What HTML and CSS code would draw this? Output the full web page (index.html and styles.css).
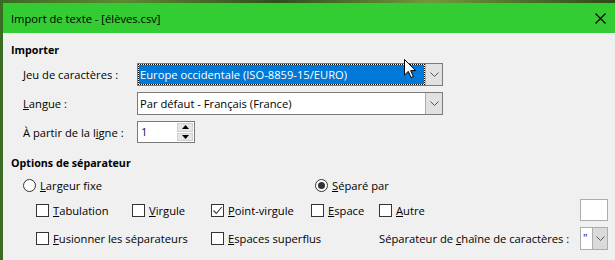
FILE: index.html
```html
<!DOCTYPE html>
<html lang="fr">
<head>
  <meta charset="UTF-8">
  <title>Import de texte</title>
  <link rel="stylesheet" href="styles.css">
</head>
<body>

<div class="desktop">
  <div class="window">
    <div class="titlebar">
      <span class="title">Import de texte - [élèves.csv]</span>
      <svg class="close" width="11" height="11" viewBox="0 0 11 11">
        <path d="M0.5 0.5 L10.5 10.5 M10.5 0.5 L0.5 10.5" stroke="#000" stroke-width="1.1" fill="none"/>
      </svg>
    </div>

    <div class="content">
      <div class="section-title">Importer</div>

      <div class="form-list">
        <div class="form-row">
          <span class="field-label"><u>J</u>eu de caractères :</span>
          <div class="combo">
            <div class="combo-value selected"><span>Europe occidentale (ISO-8859-15/EURO)</span></div>
            <div class="combo-btn">
              <svg width="9" height="5" viewBox="0 0 9 5"><path d="M0.5 0.5 L4.5 4.5 L8.5 0.5" stroke="#555" fill="none"/></svg>
            </div>
          </div>
        </div>
        <div class="form-row">
          <span class="field-label"><u>L</u>angue :</span>
          <div class="combo">
            <div class="combo-value">Par défaut - Français (France)</div>
            <div class="combo-btn">
              <svg width="9" height="5" viewBox="0 0 9 5"><path d="M0.5 0.5 L4.5 4.5 L8.5 0.5" stroke="#555" fill="none"/></svg>
            </div>
          </div>
        </div>
        <div class="form-row short">
          <span class="field-label">À partir de la l<u>i</u>gne :</span>
          <div class="spin">
            <div class="spin-value">1</div>
            <div class="spin-btns">
              <div class="spin-btn"><svg width="7" height="4" viewBox="0 0 7 4"><path d="M0 4 L3.5 0 L7 4 Z" fill="#000"/></svg></div>
              <div class="spin-btn"><svg width="7" height="4" viewBox="0 0 7 4"><path d="M0 0 L3.5 4 L7 0 Z" fill="#000"/></svg></div>
            </div>
          </div>
        </div>
      </div>

      <div class="section-title spaced">Options de séparateur</div>

      <div class="radio-row">
        <label class="option radio-first"><span class="radio"></span><span><u>L</u>argeur fixe</span></label>
        <label class="option"><span class="radio on"></span><span><u>S</u>éparé par</span></label>
      </div>

      <div class="sep-grid">
        <label class="option"><span class="check"></span><span><u>T</u>abulation</span></label>
        <label class="option"><span class="check"></span><span><u>V</u>irgule</span></label>
        <label class="option"><span class="check on">
          <svg width="11" height="11" viewBox="0 0 11 11"><path d="M1.5 5.5 L4.3 8.5 L9.8 2" stroke="#333" stroke-width="1.1" fill="none"/></svg>
        </span><span><u>P</u>oint-virgule</span></label>
        <label class="option"><span class="check"></span><span><u>E</u>space</span></label>
        <label class="option"><span class="check"></span><span><u>A</u>utre</span></label>
        <div class="textbox"></div>

        <label class="option span2"><span class="check"></span><span><u>F</u>usionner les séparateurs</span></label>
        <label class="option span2"><span class="check"></span><span><u>E</u>spaces superflus</span></label>
        <span class="option"><span>Séparateur de <u>c</u>haîne de caractères :</span></span>
        <div class="mini-combo">
          <div class="mini-value">"</div>
          <div class="mini-btn">
            <svg width="9" height="5" viewBox="0 0 9 5"><path d="M0.5 0.5 L4.5 4.5 L8.5 0.5" stroke="#555" fill="none"/></svg>
          </div>
        </div>
      </div>
    </div>
  </div>

  <!-- mouse pointer over the charset box -->
  <svg class="cursor" width="13" height="20" viewBox="0 0 13 20">
    <path d="M0.5 0.5 L0.5 16 L4.3 12.4 L7 18.5 L9.3 17.5 L6.7 11.6 L11.5 11.6 Z" fill="#fff" stroke="#000" stroke-width="1"/>
  </svg>
</div>

</body>
</html>
```

FILE: styles.css
```css
body {
  margin: 0;
  font-family: "Open Sans", "Noto Sans", sans-serif;
  font-size: 11.2px;
  color: #000;
}

.desktop {
  position: relative;
  width: 615px;
  height: 260px;
  overflow: hidden;
  background: linear-gradient(90deg, #3a6b22, #5c8a30 20%, #2f4f1c 45%, #6f9a3a 70%, #2c4a18);
}

.window {
  margin: 3px 0 0 3px;
  height: 257px;
  background-color: #f0f0f0;
}

.titlebar {
  display: flex;
  align-items: center;
  justify-content: space-between;
  height: 30px;
  padding: 0 9px 0 8px;
  background-color: #33cc33;
}

.title {
  font-size: 11.2px;
}

.content {
  padding: 9px 7px 0 8px;
}

.section-title {
  font-weight: bold;
  font-size: 10.7px;
  height: 16px;
  line-height: 16px;
}

.section-title.spaced {
  margin-top: 12px;
}

.form-list {
  display: flex;
  flex-direction: column;
  gap: 6px;
  margin-top: 5px;
  padding-left: 12px;
}

.form-row {
  display: flex;
  align-items: center;
  height: 23px;
}

.form-row.short {
  height: 22px;
}

.field-label {
  width: 114px;
  flex-shrink: 0;
}

.combo {
  display: flex;
  width: 306px;
  height: 23px;
  box-sizing: border-box;
  border: 1px solid #7a7a7a;
  background-color: #fff;
}

.combo-value {
  flex: 1;
  display: flex;
  align-items: center;
  padding-left: 2px;
}

.combo-value.selected {
  padding: 0;
  background-color: #fff;
}

.combo-value.selected span {
  flex: 1;
  align-self: stretch;
  display: flex;
  align-items: center;
  padding-left: 1px;
  color: #fff;
  background-color: #0078d7;
  background-clip: padding-box;
  border: 1px dotted #000;
}

.combo-btn,
.mini-btn {
  width: 16px;
  display: flex;
  align-items: center;
  justify-content: center;
  background-color: #e1e1e1;
  border-left: 1px solid #adadad;
}

.spin {
  display: flex;
  width: 58px;
  height: 22px;
  box-sizing: border-box;
  border: 1px solid #7a7a7a;
  background-color: #fff;
}

.spin-value {
  flex: 1;
  padding-left: 3px;
  line-height: 20px;
  color: #1a0a4a;
}

.spin-btns {
  display: flex;
  flex-direction: column;
  width: 16px;
  padding: 1px 1px 1px 0;
  gap: 1px;
}

.spin-btn {
  flex: 1;
  display: flex;
  align-items: center;
  justify-content: center;
  background-color: #e6e6e6;
  border: 1px solid #cfcfcf;
}

.radio-row {
  display: flex;
  align-items: center;
  height: 20px;
  margin-top: 4px;
  padding-left: 12px;
}

.option {
  display: flex;
  align-items: center;
  gap: 4px;
  min-width: 0;
  white-space: nowrap;
}

.radio-first {
  width: 292px;
}

.radio {
  width: 13px;
  height: 13px;
  box-sizing: border-box;
  border: 1px solid #333;
  border-radius: 50%;
  background-color: #fff;
  display: flex;
  align-items: center;
  justify-content: center;
}

.radio.on::after {
  content: "";
  width: 7px;
  height: 7px;
  border-radius: 50%;
  background-color: #333;
}

.sep-grid {
  display: grid;
  grid-template-columns: 96px 79px 100px 68px minmax(0, 1fr) 28px;
  grid-template-rows: 22px 23px;
  row-gap: 6px;
  margin-top: 4px;
  padding-left: 25px;
}

.span2 {
  grid-column: span 2;
}

.check {
  width: 13px;
  height: 13px;
  flex-shrink: 0;
  box-sizing: border-box;
  border: 1px solid #333;
  background-color: #fff;
  display: flex;
  align-items: center;
  justify-content: center;
}

.textbox {
  box-sizing: border-box;
  border: 1px solid #adadad;
  background-color: #fff;
}

.mini-combo {
  display: flex;
  box-sizing: border-box;
  border: 1px solid #adadad;
  background-color: #fff;
}

.mini-value {
  width: 9px;
  padding-left: 2px;
  line-height: 20px;
  color: #1a0a4a;
}

.mini-btn {
  flex: 1;
  background-color: #dadada;
}

.cursor {
  position: absolute;
  left: 404px;
  top: 59px;
}
```
